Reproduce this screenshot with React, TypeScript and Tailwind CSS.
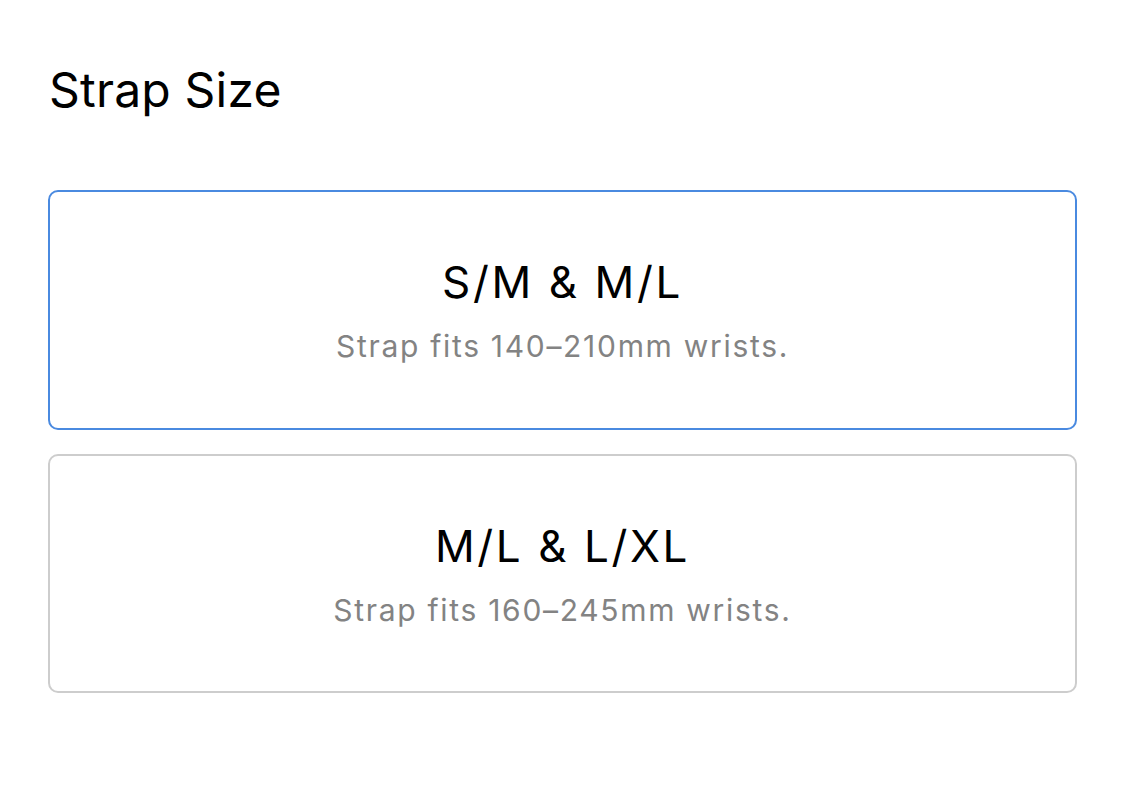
const options = [
  { label: 'S/M & M/L', note: 'Strap fits 140–210mm wrists.', selected: true },
  { label: 'M/L & L/XL', note: 'Strap fits 160–245mm wrists.', selected: false },
];

export default function App() {
  return (
    <div className="min-h-screen bg-white px-[48px] pt-[62px] font-['Inter','Liberation_Sans',sans-serif] text-black">
      <h2 className="pl-[1px] text-[48px] leading-[56px] font-normal tracking-[0.2px]">Strap Size</h2>
      <div className="mt-[72px] flex w-[1029px] flex-col gap-[24px]">
        {options.map((opt) => (
          <button
            key={opt.label}
            className={
              opt.selected
                ? 'flex h-[240px] flex-col items-center justify-center rounded-[10px] border-2 border-[#4a8ae0] bg-white'
                : 'flex h-[239px] flex-col items-center justify-center rounded-[10px] border-2 border-[#cdcdcd] bg-white'
            }
          >
            <span className="text-[44px] leading-[52px] tracking-[2.6px]">{opt.label}</span>
            <span className="mt-[20px] text-[30px] leading-[36px] tracking-[1.7px] text-[#838383]">{opt.note}</span>
          </button>
        ))}
      </div>
    </div>
  );
}
